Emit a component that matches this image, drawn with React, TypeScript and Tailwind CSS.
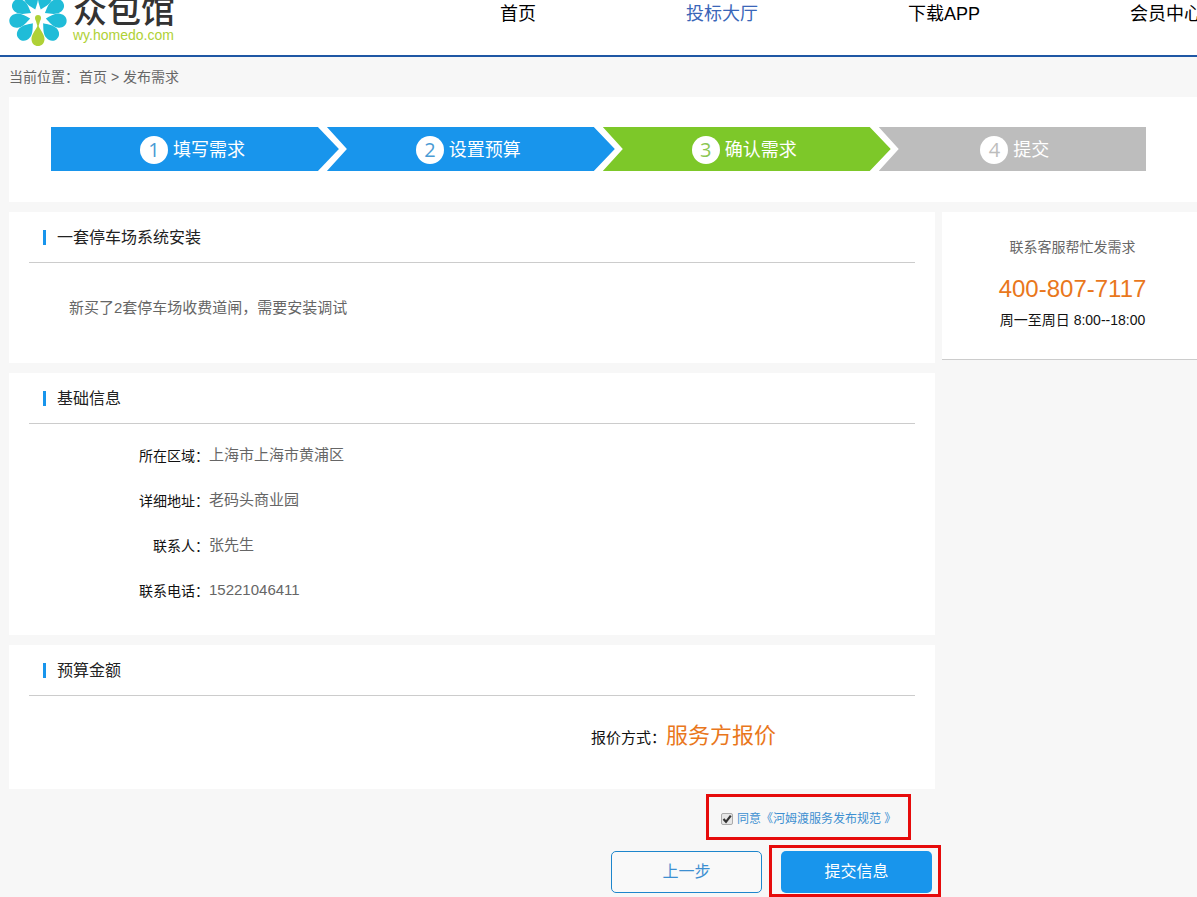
const navItems = [
    { label: '首页', active: false },
    { label: '投标大厅', active: true },
    { label: '下载APP', active: false },
    { label: '会员中心', active: false },
]

const info = [
    { label: '所在区域：', value: '上海市上海市黄浦区' },
    { label: '详细地址：', value: '老码头商业园' },
    { label: '联系人：', value: '张先生' },
    { label: '联系电话：', value: '15221046411' },
]

const petals = [130, 170, 210, 250, 290, 330, 10, 50]

const Logo = () => {
    return (
        <a href="#" className="flex shrink-0 items-end gap-[5px]">
            <svg viewBox="-30 -30 60 60" className="h-[60px] w-[60px]" aria-hidden="true">
                {petals.map((angle) => (
                    <path
                        key={angle}
                        d="M8 0 C12 -3 16 -7 21 -7 C26 -7 29 -4 29 0 C29 4 26 7 21 7 C16 7 12 3 8 0Z"
                        fill="#20bcd8"
                        transform={`rotate(${angle})`}
                    />
                ))}
                <path d="M0 8 C2 13 6.5 17 6.5 22 C6.5 26.5 3.5 29 0 29 C-3.5 29 -6.5 26.5 -6.5 22 C-6.5 17 -2 13 0 8Z" fill="#afd136" />
                <circle cx="0" cy="1" r="3" fill="#afd136" />
                <path d="M-2.5 2.5 L0 11 L2.5 2.5Z" fill="#afd136" />
            </svg>
            <span className="flex flex-col">
                <span className="text-[34px] leading-8 font-medium text-[#333]">众包馆</span>
                <span className="pb-1 font-['Liberation_Sans',sans-serif] text-sm leading-4 text-[#afd136]">wy.homedo.com</span>
            </span>
        </a>
    )
}

const Header = () => {
    return (
        <header className="flex h-[57px] items-end overflow-hidden border-b-2 border-[#1f57a4] bg-white pl-2">
            <div className="w-[492px] shrink-0 pb-2">
                <Logo />
            </div>
            <nav className="flex shrink-0 gap-[150px] self-start text-lg leading-7 whitespace-nowrap">
                {navItems.map((item) => (
                    <a key={item.label} href="#" className={item.active ? 'text-[#3a66b8]' : 'text-black'}>
                        {item.label}
                    </a>
                ))}
            </nav>
        </header>
    )
}

const Steps = () => {
    return (
        <ol className="flex h-[44px] text-lg text-white">
            <li className="flex flex-[288] items-center justify-center gap-[5px] bg-[#1895ec] pt-px pr-[5px] [clip-path:polygon(0_0,calc(100%-21px)_0,100%_50%,calc(100%-21px)_100%,0_100%)]">
                <span className="flex size-7 items-center justify-center rounded-full bg-white font-['Open_Sans',sans-serif] text-xl text-[#4a9bd4]">1</span>
                填写需求
            </li>
            <li className="-ml-3 flex flex-[288] items-center justify-center gap-[5px] bg-[#1895ec] pt-px pr-[5px] [clip-path:polygon(0_0,calc(100%-21px)_0,100%_50%,calc(100%-21px)_100%,0_100%,20px_50%)]">
                <span className="flex size-7 items-center justify-center rounded-full bg-white font-['Open_Sans',sans-serif] text-xl text-[#4a9bd4]">2</span>
                设置预算
            </li>
            <li className="-ml-3 flex flex-[288] items-center justify-center gap-[5px] bg-[#7dc829] pt-px pr-[5px] [clip-path:polygon(0_0,calc(100%-21px)_0,100%_50%,calc(100%-21px)_100%,0_100%,20px_50%)]">
                <span className="flex size-7 items-center justify-center rounded-full bg-white font-['Open_Sans',sans-serif] text-xl text-[#8cc653]">3</span>
                确认需求
            </li>
            <li className="-ml-3 flex flex-[267] items-center justify-center gap-[5px] bg-[#bdbdbd] pt-px pl-[5px] [clip-path:polygon(0_0,100%_0,100%_100%,0_100%,20px_50%)]">
                <span className="flex size-7 items-center justify-center rounded-full bg-white font-['Open_Sans',sans-serif] text-xl text-[#bdbdbd]">4</span>
                提交
            </li>
        </ol>
    )
}

const CardTitle = ({ children }: { children: string }) => {
    return (
        <div className="flex h-[51px] items-center gap-[11px] border-b border-[#ccc] pl-3.5">
            <span className="h-[15px] w-[3px] bg-[#1895ec]"></span>
            <h2 className="pt-0.5 text-base text-[#222]">{children}</h2>
        </div>
    )
}

const Sidebar = () => {
    return (
        <aside className="w-[255px] shrink-0 self-start border-b border-[#ccc] bg-white pt-[23px] pb-[27px] pl-[6px] text-center text-sm">
            <p className="leading-6 text-[#666]">联系客服帮忙发需求</p>
            <p className="mt-3 text-2xl leading-9 text-[#e9771c]">400-807-7117</p>
            <p className="mt-px leading-6 text-[#111]">周一至周日 8:00--18:00</p>
        </aside>
    )
}

const App = () => {
    return (
        <div className="min-h-screen overflow-hidden bg-[#f7f7f7] font-['Liberation_Sans','Noto_Sans_CJK_SC',sans-serif]">
            <Header />
            <div className="pl-[9px]">
                <p className="py-2 text-sm leading-6 text-[#666]">
                    当前位置：<a href="#">首页</a> &gt; 发布需求
                </p>

                <section className="bg-white pt-[30px] pr-[51px] pb-[31px] pl-[42px]">
                    <Steps />
                </section>

                <div className="mt-[10px] flex gap-[7px]">
                    <main className="flex flex-1 flex-col gap-[10px]">
                        <section className="bg-white px-5 pb-[43px]">
                            <CardTitle>一套停车场系统安装</CardTitle>
                            <p className="pt-[33px] pl-10 text-[15px] leading-6 text-[#666]">
                                新买了2套停车场收费道闸，需要安装调试
                            </p>
                        </section>

                        <section className="bg-white px-5 pb-[22px]">
                            <CardTitle>基础信息</CardTitle>
                            <dl className="pt-[9px]">
                                {info.map((item) => (
                                    <div key={item.label} className="flex h-[45px] items-center">
                                        <dt className="w-[180px] text-right text-sm text-[#111]">{item.label}</dt>
                                        <dd className="text-[15px] text-[#666]">{item.value}</dd>
                                    </div>
                                ))}
                            </dl>
                        </section>

                        <section className="bg-white px-5 pb-[33px]">
                            <CardTitle>预算金额</CardTitle>
                            <p className="flex items-baseline justify-end pt-[22px] pr-[139px] leading-9">
                                <span className="text-[15px] text-[#111]">报价方式：</span>
                                <span className="text-[22px] text-[#e9771c]">服务方报价</span>
                            </p>
                        </section>
                    </main>
                    <Sidebar />
                </div>

                <div className="flex w-[932px] flex-col items-end pt-[5px]">
                    <div className="mr-[30px] flex h-[46px] w-[205px] items-center border-[3px] border-[#e60b0b] pt-1 pl-3">
                        <label className="flex items-center gap-1 text-xs whitespace-nowrap text-[#3d8fd1]">
                            <span className="relative flex">
                                <input
                                    type="checkbox"
                                    defaultChecked
                                    className="peer size-3 appearance-none rounded-xs border border-[#aaa] bg-[#e6e6e6]"
                                />
                                <svg
                                    viewBox="0 0 12 12"
                                    className="pointer-events-none absolute inset-0 hidden size-3 peer-checked:block"
                                    fill="none"
                                    stroke="#333"
                                    strokeWidth="2.2"
                                    aria-hidden="true"
                                >
                                    <path d="M2.5 6 L5 8.8 L9.8 2.6" />
                                </svg>
                            </span>
                            <span>同意《河姆渡服务发布规范 》</span>
                        </label>
                    </div>

                    <div className="mt-[5px] flex items-start gap-[7px]">
                        <button
                            type="button"
                            className="mt-[6px] h-[42px] w-[151px] rounded-[5px] border border-[#1e86cc] bg-[#f9f9f9] text-base text-[#3d8fd1]"
                        >
                            上一步
                        </button>
                        <div className="border-[3px] border-[#e60b0b] pt-[3px] pr-[6px] pb-px pl-[9px]">
                            <button type="submit" className="block h-[42px] w-[151px] rounded-[5px] bg-[#1895ec] text-base text-white">
                                提交信息
                            </button>
                        </div>
                    </div>
                </div>
            </div>
        </div>
    )
}

export default App
